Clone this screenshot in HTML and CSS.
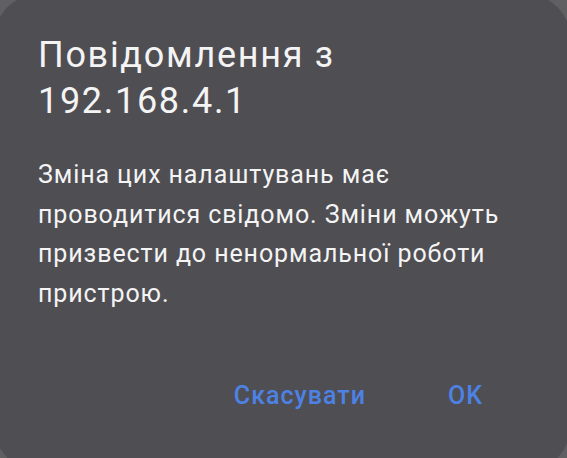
FILE: index.html
```html
<!DOCTYPE html>
<html lang="uk">
<head>
<meta charset="utf-8">
<link rel="stylesheet" href="styles.css">
</head>
<body>
<div class="dialog">
  <h1 class="title">Повідомлення з 192.168.4.1</h1>
  <p class="message">Зміна цих налаштувань має проводитися свідомо. Зміни можуть призвести до ненормальної роботи пристрою.</p>
  <div class="actions">
    <span class="btn">Скасувати</span>
    <span class="btn">OK</span>
  </div>
</div>
</body>
</html>
```
FILE: styles.css
```css
html, body {
  margin: 0;
  padding: 0;
  width: 567px;
  height: 458px;
  overflow: hidden;
  background: #606062;
}
.dialog {
  box-sizing: border-box;
  margin: -5px 0 0 -5px;
  width: 575px;
  height: 475px;
  border-radius: 42px;
  background: #4f4e53;
  padding: 37px 45px 0 43px;
  font-family: Roboto, "Noto Sans", sans-serif;
  color: #f4f4f4;
}
.title {
  margin: 0;
  font-size: 36px;
  font-weight: 400;
  line-height: 46px;
  letter-spacing: 1.7px;
}
.message {
  margin: 31px 0 0 0;
  font-size: 25px;
  line-height: 39.5px;
  letter-spacing: 0.9px;
}
.actions {
  display: flex;
  justify-content: flex-end;
  gap: 82px;
  margin-top: 68px;
  padding-right: 42px;
}
.btn {
  color: #4d82e4;
  font-size: 25px;
  font-weight: 500;
  letter-spacing: 1px;
}
```
